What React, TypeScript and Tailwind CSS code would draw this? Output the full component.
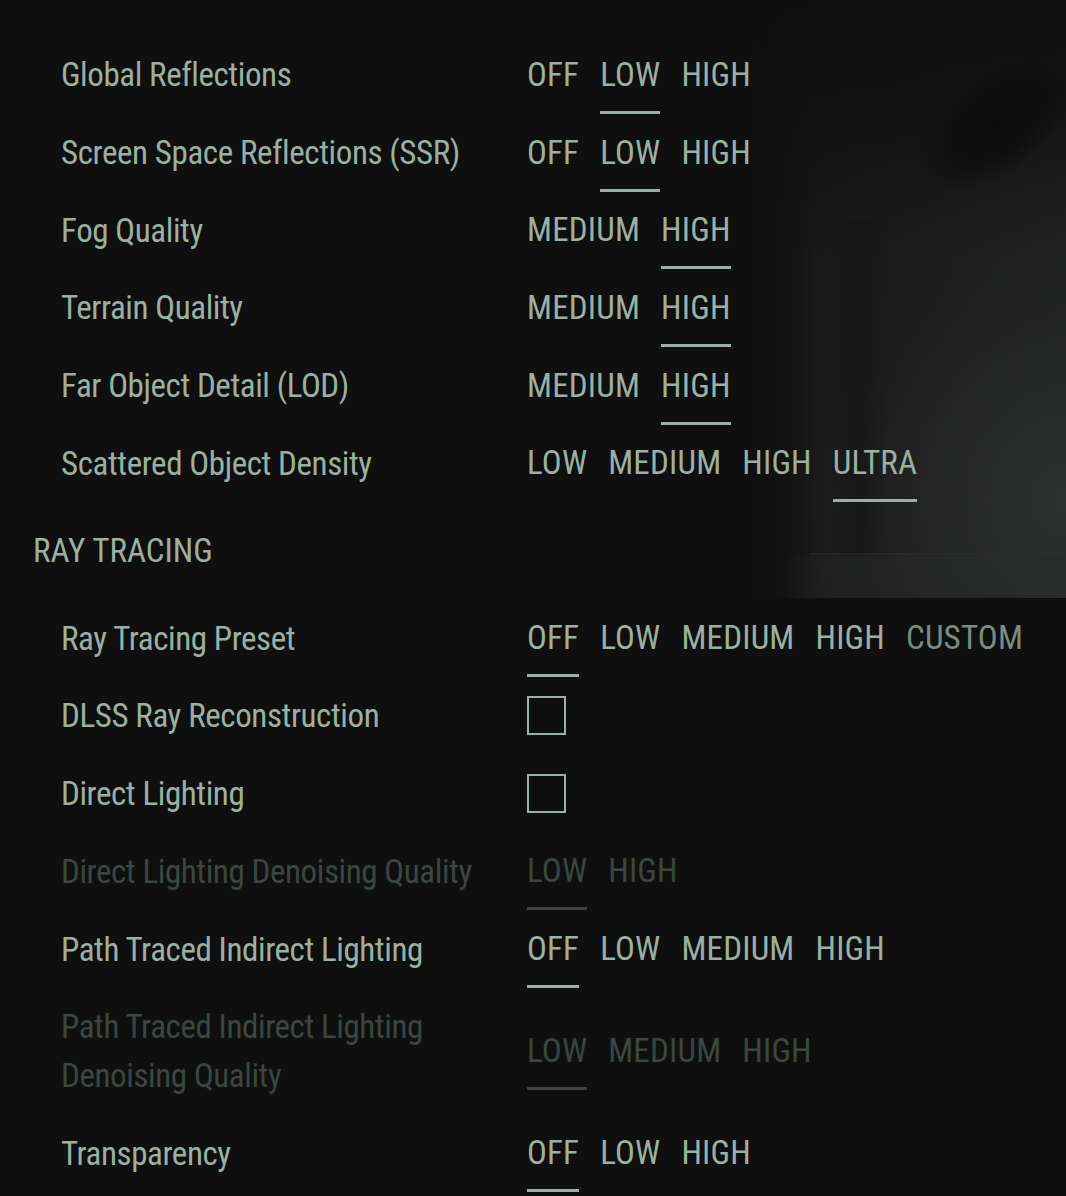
type Setting = {
  label: string;
  options?: string[];
  selected?: number;
  checkbox?: boolean;
  dim?: boolean;
  muted?: string[];
};

const GRAPHICS: Setting[] = [
  { label: "Global Reflections", options: ["OFF", "LOW", "HIGH"], selected: 1 },
  { label: "Screen Space Reflections (SSR)", options: ["OFF", "LOW", "HIGH"], selected: 1 },
  { label: "Fog Quality", options: ["MEDIUM", "HIGH"], selected: 1 },
  { label: "Terrain Quality", options: ["MEDIUM", "HIGH"], selected: 1 },
  { label: "Far Object Detail (LOD)", options: ["MEDIUM", "HIGH"], selected: 1 },
  { label: "Scattered Object Density", options: ["LOW", "MEDIUM", "HIGH", "ULTRA"], selected: 3 },
];

const RAY_TRACING: Setting[] = [
  {
    label: "Ray Tracing Preset",
    options: ["OFF", "LOW", "MEDIUM", "HIGH", "CUSTOM"],
    selected: 0,
    muted: ["CUSTOM"],
  },
  { label: "DLSS Ray Reconstruction", checkbox: true },
  { label: "Direct Lighting", checkbox: true },
  { label: "Direct Lighting Denoising Quality", options: ["LOW", "HIGH"], selected: 0, dim: true },
  { label: "Path Traced Indirect Lighting", options: ["OFF", "LOW", "MEDIUM", "HIGH"], selected: 0 },
  {
    label: "Path Traced Indirect Lighting Denoising Quality",
    options: ["LOW", "MEDIUM", "HIGH"],
    selected: 0,
    dim: true,
  },
  { label: "Transparency", options: ["OFF", "LOW", "HIGH"], selected: 0 },
];

// blurred scene behind the menu, top right
const Backdrop = () => (
  <svg className="absolute inset-0 w-full h-full" viewBox="0 0 1066 1196" preserveAspectRatio="none">
    <defs>
      <linearGradient id="lit" x1="0" y1="0" x2="1" y2="0">
        <stop offset="0" stopColor="#0f0f0f" stopOpacity="0" />
        <stop offset="0.22" stopColor="#181918" />
        <stop offset="0.5" stopColor="#1b1c1b" />
        <stop offset="1" stopColor="#212322" />
      </linearGradient>
      <linearGradient id="fade" x1="0" y1="0" x2="0" y2="1">
        <stop offset="0" stopColor="#0f0f0f" />
        <stop offset="0.35" stopColor="#0f0f0f" stopOpacity="0.85" />
        <stop offset="1" stopColor="#0f0f0f" stopOpacity="0" />
      </linearGradient>
      <radialGradient id="glow" gradientUnits="userSpaceOnUse" cx="1066" cy="500" r="280">
        <stop offset="0" stopColor="#2e302f" />
        <stop offset="0.5" stopColor="#272928" stopOpacity="0.7" />
        <stop offset="1" stopColor="#1b1c1b" stopOpacity="0" />
      </radialGradient>
      <radialGradient
        id="shade"
        gradientUnits="userSpaceOnUse"
        cx="0"
        cy="0"
        r="1"
        gradientTransform="translate(995 125) rotate(-35) scale(90 50)"
      >
        <stop offset="0" stopColor="#0b0b0b" />
        <stop offset="0.6" stopColor="#0d0d0d" stopOpacity="0.7" />
        <stop offset="1" stopColor="#0d0d0d" stopOpacity="0" />
      </radialGradient>
      <linearGradient id="band" x1="0" y1="0" x2="1" y2="0">
        <stop offset="0" stopColor="#262827" stopOpacity="0" />
        <stop offset="0.2" stopColor="#262827" stopOpacity="0.8" />
        <stop offset="1" stopColor="#2a2c2b" />
      </linearGradient>
      <linearGradient id="col" x1="0" y1="0" x2="1" y2="0">
        <stop offset="0" stopColor="#0f0f0f" stopOpacity="0" />
        <stop offset="0.5" stopColor="#0f0f0f" stopOpacity="0.35" />
        <stop offset="1" stopColor="#0f0f0f" stopOpacity="0" />
      </linearGradient>
    </defs>
    <rect width="1066" height="1196" fill="#0f0f0f" />
    <rect x="745" y="0" width="321" height="598" fill="url(#lit)" />
    <rect x="745" y="0" width="321" height="260" fill="url(#fade)" />
    <rect x="745" y="0" width="321" height="598" fill="url(#glow)" />
    <rect x="745" y="0" width="321" height="598" fill="url(#shade)" />
    <rect x="830" y="220" width="60" height="340" fill="url(#col)" />
    <rect x="780" y="556" width="286" height="42" fill="url(#band)" opacity="0.6" />
    <rect x="810" y="553" width="256" height="2" fill="#2f3130" opacity="0.45" />
  </svg>
);

const OptionList = ({ s }: { s: Setting }) => {
  const base = s.dim ? "text-[#3b4640]" : "text-[#9cafa2]";
  const line = s.dim ? "bg-[#3b4640]" : "bg-[#9cafa2]";
  return (
    <div className="flex items-center gap-[21px] tracking-[0.2px]">
      {s.options!.map((o, i) => (
        <div key={o} className="relative">
          <span
            className={`block leading-[40px] ${
              s.muted?.includes(o) ? "text-[#7c8b81]" : base
            }`}
          >
            {o}
          </span>
          {i === s.selected && (
            <div className={`absolute left-0 right-0 top-[56px] h-[3px] ${line}`} />
          )}
        </div>
      ))}
    </div>
  );
};

const Row = ({ s }: { s: Setting }) => (
  <div className="flex items-center py-[14.35px] pl-[61px]">
    <div
      className={`w-[466px] pr-[20px] leading-[49px] tracking-[-0.4px] ${
        s.dim ? "text-[#3b4640]" : "text-[#9cafa2]"
      }`}
    >
      {s.label}
    </div>
    {s.checkbox ? (
      <div className="w-[39px] h-[39px] border-2 border-[#9cafa2]" />
    ) : (
      <OptionList s={s} />
    )}
  </div>
);

export default function App() {
  return (
    <div className="relative w-full min-h-[1196px] overflow-hidden bg-[#0f0f0f]">
      <Backdrop />
      <div className="relative pt-[36px] font-['Roboto'] [font-stretch:condensed] text-[33px]">
        {GRAPHICS.map((s) => (
          <Row key={s.label} s={s} />
        ))}
        <div className="flex items-center h-[97.3px] pl-[33px] text-[#9cafa2] leading-[40px]">
          RAY TRACING
        </div>
        {RAY_TRACING.map((s) => (
          <Row key={s.label} s={s} />
        ))}
      </div>
    </div>
  );
}
